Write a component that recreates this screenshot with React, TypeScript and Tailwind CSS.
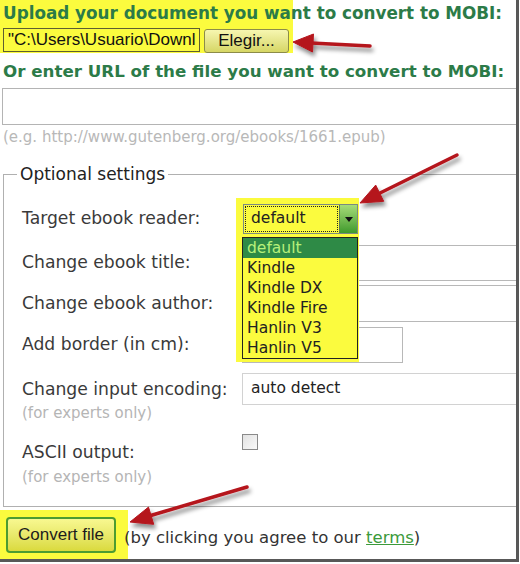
import React from "react";

const verdana = { fontFamily: '"DejaVu Sans", Verdana, sans-serif' };
const arial = { fontFamily: '"Liberation Sans", Arial, sans-serif' };

function Arrows() {
  return (
    <svg className="pointer-events-none absolute left-0 top-0" width="519" height="562" viewBox="0 0 519 562">
      <defs>
        <filter id="sh" x="-20%" y="-50%" width="140%" height="200%">
          <feDropShadow dx="2" dy="4" stdDeviation="2" floodColor="#000" floodOpacity="0.45" />
        </filter>
      </defs>
      <g filter="url(#sh)" fill="#b5141d" stroke="#b5141d">
        <line x1="311" y1="43" x2="370" y2="46" strokeWidth="3.5" strokeLinecap="round" />
        <polygon points="293,42 312.5,52 313.5,34" strokeWidth="1" strokeLinejoin="round" />
        <line x1="378" y1="194" x2="457" y2="155" strokeWidth="3.5" strokeLinecap="round" />
        <polygon points="360,203 383.7,201.3 375.7,185.1" strokeWidth="1" strokeLinejoin="round" />
        <line x1="149" y1="516" x2="247" y2="487" strokeWidth="3.5" strokeLinecap="round" />
        <polygon points="130,522 153.7,524.3 148.5,507.1" strokeWidth="1" strokeLinejoin="round" />
      </g>
    </svg>
  );
}

export default function App() {
  const items = ["default", "Kindle", "Kindle DX", "Kindle Fire", "Hanlin V3", "Hanlin V5"];
  return (
    <div className="relative h-[562px] w-[519px] overflow-hidden border-b-[3px] border-r-[3px] border-[#585858] bg-white">
      {/* upload block */}
      <div className="h-[53px] w-[293px] bg-[#fbfb3e]">
        <div
          className="whitespace-nowrap pl-[3px] pt-[3px] text-[16.8px] font-bold leading-[20px] text-[#2c7b48]"
          style={verdana}
        >
          Upload your document you want to convert to MOBI:
        </div>
        <div className="mt-[4px] flex items-center">
          <div
            className="ml-[3px] h-[24px] w-[197px] overflow-hidden whitespace-nowrap border border-[#5e5e30] pl-[4px] text-[17px] leading-[22px] text-[#111]"
            style={arial}
          >
            "C:\Users\Usuario\Downl
          </div>
          <div
            className="ml-[4px] mt-[2px] flex h-[24px] w-[85px] items-center justify-center rounded-[3px] border border-[#8c8c48] bg-gradient-to-b from-[#f6f6b0] to-[#d6d664] text-[17px] text-[#111]"
            style={arial}
          >
            Elegir...
          </div>
        </div>
      </div>

      <div
        className="mt-[8px] whitespace-nowrap pl-[3px] text-[16.7px] font-bold leading-[20px] text-[#2c7b48]"
        style={verdana}
      >
        Or enter URL of the file you want to convert to MOBI:
      </div>
      <div className="ml-[2px] mt-[7px] h-[37px] w-[540px] border border-[#b4b4b4]" />
      <div className="mt-[4px] whitespace-nowrap pl-[3px] text-[15px] leading-[16px] text-[#b8b8b8]" style={verdana}>
        (e.g. http://www.gutenberg.org/ebooks/1661.epub)
      </div>

      {/* optional settings */}
      <div
        className="ml-[3px] mt-[29px] w-[560px] border border-[#b0b0b0] pb-[21px] pl-[18px] text-[17.2px] text-[#3a3a3a]"
        style={verdana}
      >
        <div className="-ml-[5px] -mt-[11px] w-fit bg-white px-[3px] text-[17px] leading-[20px] text-[#222]">
          Optional settings
        </div>

        <div className="mt-[18px] flex h-[34px] items-center">
          <div className="w-[220px] whitespace-nowrap">Target ebook reader:</div>
          <div className="relative z-10 ml-[1px] h-[30px] w-[115px] text-[15.5px]">
            <div className="absolute -left-[7px] -top-[6px] h-[164px] w-[123px] bg-[#fbfb3e]" />
            <div className="relative flex h-[30px] w-[115px] border border-[#7b8a80]">
              <div className="m-[1px] flex flex-1 items-center border border-dotted border-[#222] pl-[5px] text-[#222]">
                default
              </div>
              <div className="flex w-[18px] items-center justify-center border-l border-[#5c7c50] bg-gradient-to-b from-[#a6dc78] to-[#3e9a2c]">
                <div className="h-0 w-0 border-l-[4px] border-r-[4px] border-t-[5px] border-l-transparent border-r-transparent border-t-[#111]" />
              </div>
            </div>
            <div className="absolute -left-[1px] top-[33px] w-[116px] border border-[#222] leading-[20px] text-[#222]">
              {items.map((it, i) => (
                <div
                  key={it}
                  className={i === 0 ? "h-[20px] bg-[#2e8a46] pl-[4px] text-[#b6f07a]" : "h-[20px] pl-[4px]"}
                >
                  {it}
                </div>
              ))}
            </div>
          </div>
        </div>

        <div className="mt-[9px] flex h-[36px] items-center">
          <div className="w-[220px] whitespace-nowrap">Change ebook title:</div>
          <div className="h-full flex-1 border border-[#b8b8b8]" />
        </div>

        <div className="mt-[4px] flex h-[37px] items-center">
          <div className="w-[220px] whitespace-nowrap">Change ebook author:</div>
          <div className="h-full flex-1 border border-[#b8b8b8]" />
        </div>

        <div className="mt-[5px] flex h-[36px] items-center">
          <div className="w-[220px] whitespace-nowrap">Add border (in cm):</div>
          <div className="h-full w-[161px] border border-[#b8b8b8]" />
        </div>

        <div className="mt-[10px] flex items-start">
          <div className="w-[220px] pt-[6px]">
            <div className="whitespace-nowrap leading-[20px]">Change input encoding:</div>
            <div className="mt-[6px] whitespace-nowrap text-[15px] leading-[16px] text-[#b5b5b5]">(for experts only)</div>
          </div>
          <div className="flex h-[32px] flex-1 items-center border border-[#d2d2d2] pl-[8px] text-[15.5px] text-[#222]">
            auto detect
          </div>
        </div>

        <div className="mt-[13px] flex items-start">
          <div className="w-[220px] pt-[8px]">
            <div className="leading-[20px]">ASCII output:</div>
            <div className="mt-[7px] whitespace-nowrap text-[15px] leading-[16px] text-[#b5b5b5]">(for experts only)</div>
          </div>
          <div className="h-[16px] w-[16px] border border-[#8a8a8a] bg-gradient-to-br from-[#e2e2e2] to-[#fafafa]" />
        </div>
      </div>

      {/* convert */}
      <div className="mt-[3px] flex items-start">
        <div className="h-[49px] w-[128px] bg-[#fbfb3e] pl-[6px] pt-[7px]">
          <div
            className="flex h-[36px] w-[110px] items-center justify-center rounded-[4px] border-2 border-[#4d9c31] bg-gradient-to-b from-[#f8f890] to-[#dada3c] text-[17px] text-[#1c1c1c]"
            style={arial}
          >
            Convert file
          </div>
        </div>
        <div
          className="relative -ml-[4px] mt-[18px] whitespace-nowrap text-[16.5px] leading-[20px] text-[#333]"
          style={verdana}
        >
          (by clicking you agree to our <span className="text-[#3b9a3b] underline">terms</span>)
        </div>
      </div>

      <Arrows />
    </div>
  );
}
